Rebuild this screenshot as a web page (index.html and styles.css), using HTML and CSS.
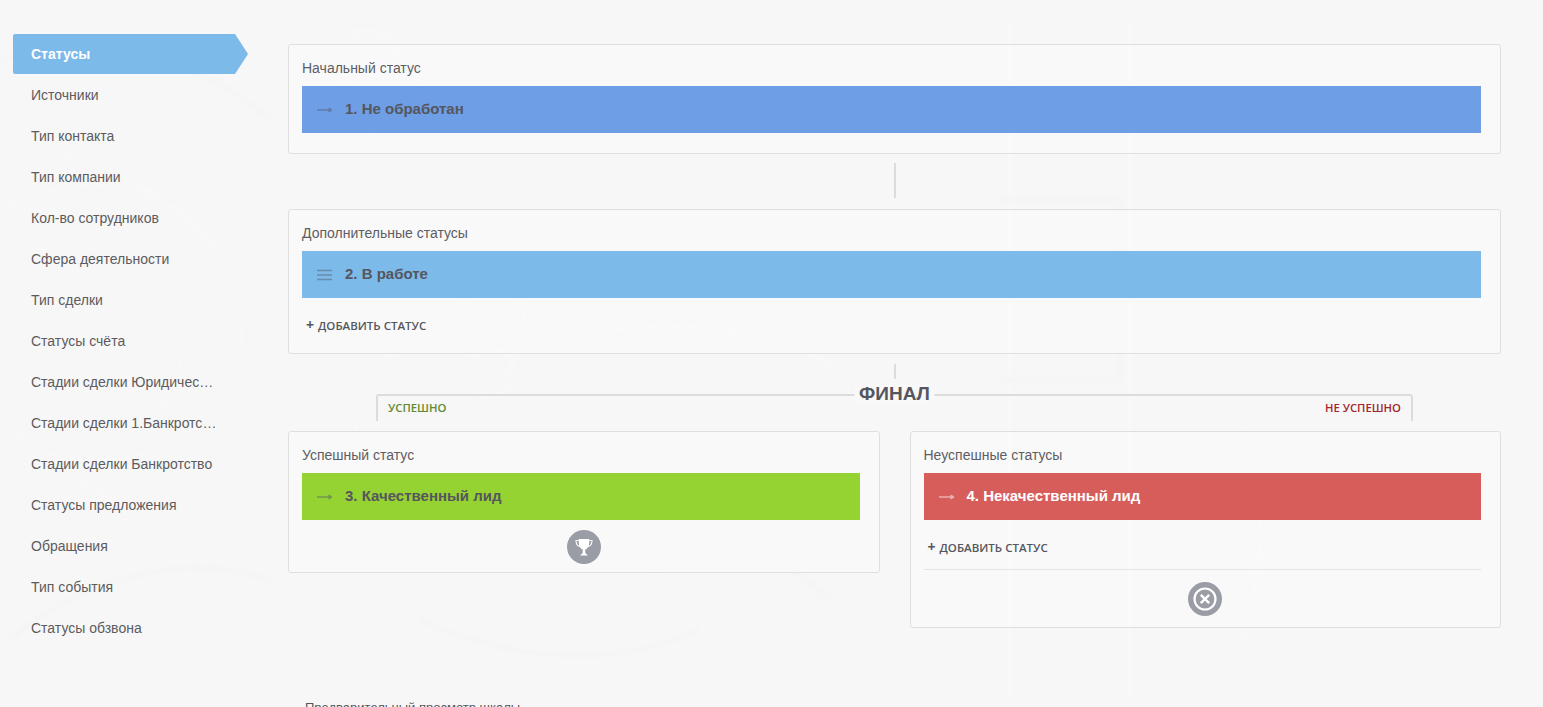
FILE: index.html
```html
<!DOCTYPE html>
<html lang="ru">
<head>
<meta charset="utf-8">
<title>Статусы</title>
<link rel="stylesheet" href="styles.css">
</head>
<body>
<svg class="bg-art" width="1543" height="707" viewBox="0 0 1543 707" aria-hidden="true">
  <g fill="none" stroke="#fbfbfb" stroke-width="2">
    <path d="M0 210c60-30 130-40 190 10s70 130 20 190-130 60-210 30"/>
    <path d="M0 260c50-20 110-20 150 20s40 90 10 130-90 40-160 20"/>
    <path d="M40 150c60 10 130 40 170 100M60 470c50 30 110 60 140 120"/>
    <path d="M470 300c-60 20-110 70-115 130s40 60 120 60"/>
    <circle cx="490" cy="372" r="24"/>
    <path d="M520 300c10 30 0 60-20 80M560 340c120-30 260-10 290 50"/>
    <path d="M350 30c40 0 70 30 70 60s-30 50-60 40-30-50 0-60"/>
    <circle cx="372" cy="52" r="22"/>
    <path d="M1010 20v680M1130 20v680M1240 400c30 60 30 200-20 300"/>
  </g>
  <g fill="none" stroke="#f3f3f3" stroke-width="5">
    <path d="M0 60c90-30 190-10 270 60M10 640c70-60 170-90 260-60"/>
    <path d="M420 620c90 40 190 50 280 10M650 570c70-30 130-20 180 30"/>
    <path d="M1000 200h120v180h-120"/>
  </g>
</svg>
<div class="layout">
  <nav class="sidebar">
    <a class="nav-item active">Статусы</a>
    <a class="nav-item">Источники</a>
    <a class="nav-item">Тип контакта</a>
    <a class="nav-item">Тип компании</a>
    <a class="nav-item">Кол-во сотрудников</a>
    <a class="nav-item">Сфера деятельности</a>
    <a class="nav-item">Тип сделки</a>
    <a class="nav-item">Статусы счёта</a>
    <a class="nav-item">Стадии сделки Юридическое сопровождение</a>
    <a class="nav-item">Стадии сделки 1.Банкротство физлиц</a>
    <a class="nav-item">Стадии сделки Банкротство</a>
    <a class="nav-item">Статусы предложения</a>
    <a class="nav-item">Обращения</a>
    <a class="nav-item">Тип события</a>
    <a class="nav-item">Статусы обзвона</a>
  </nav>
  <main class="content">
    <section class="panel panel-start">
      <h3 class="panel-title">Начальный статус</h3>
      <div class="status status-blue">
        <svg class="status-icon" width="15" height="10" viewBox="0 0 15 10"><path d="M0 5h14M11.500 3.200l3 1.800-3 1.800" fill="none" stroke="currentColor" stroke-width="1.700"/></svg>
        <span>1. Не обработан</span>
      </div>
    </section>
    <div class="connector connector-long"></div>
    <section class="panel panel-extra">
      <h3 class="panel-title">Дополнительные статусы</h3>
      <div class="status status-sky">
        <svg class="status-icon" width="15" height="12" viewBox="0 0 15 12"><path d="M0 1.500h15M0 6h15M0 10.500h15" fill="none" stroke="currentColor" stroke-width="1.700"/></svg>
        <span>2. В работе</span>
      </div>
      <a class="add-status"><b class="plus">+</b> ДОБАВИТЬ СТАТУС</a>
    </section>
    <div class="connector connector-short"></div>
    <div class="final-bracket">
      <span class="final-label">ФИНАЛ</span>
      <span class="outcome outcome-ok">УСПЕШНО</span>
      <span class="outcome outcome-bad">НЕ УСПЕШНО</span>
    </div>
    <div class="final-columns">
      <section class="panel panel-ok">
        <h3 class="panel-title">Успешный статус</h3>
        <div class="status status-green">
          <svg class="status-icon" width="15" height="10" viewBox="0 0 15 10"><path d="M0 5h14M11.500 3.200l3 1.800-3 1.800" fill="none" stroke="currentColor" stroke-width="1.700"/></svg>
          <span>3. Качественный лид</span>
        </div>
        <div class="badge-row badge-row-ok">
          <svg class="badge" width="34" height="34" viewBox="0 0 34 34"><circle cx="17" cy="17" r="17" fill="#9b9da6"/><path d="M11.800 9h10.400v4.500c0 3-2 5.300-3.900 6v3.300c0 .9 2 1.300 2.400 2.700h-7.400c.4-1.400 2.400-1.800 2.400-2.700v-3.300c-1.900-.7-3.900-3-3.900-6z" fill="#fff"/><path d="M11.800 10.500H9c0 3.500 1.500 5.500 4 6.200M22.200 10.500H25c0 3.500-1.500 5.500-4 6.200" fill="none" stroke="#fff" stroke-width="1.100"/></svg>
        </div>
      </section>
      <section class="panel panel-bad">
        <h3 class="panel-title">Неуспешные статусы</h3>
        <div class="status status-red">
          <svg class="status-icon" width="15" height="10" viewBox="0 0 15 10"><path d="M0 5h14M11.500 3.200l3 1.800-3 1.800" fill="none" stroke="currentColor" stroke-width="1.700"/></svg>
          <span>4. Некачественный лид</span>
        </div>
        <a class="add-status add-status-bad"><b class="plus">+</b> ДОБАВИТЬ СТАТУС</a>
        <div class="badge-row badge-row-bad">
          <svg class="badge" width="34" height="34" viewBox="0 0 34 34"><circle cx="17" cy="17" r="17" fill="#9b9da6"/><circle cx="17" cy="17" r="10.500" fill="none" stroke="#fff" stroke-width="2.200"/><path d="M12.800 12.800l8.400 8.400M21.200 12.800l-8.400 8.400" stroke="#fff" stroke-width="2.400"/></svg>
        </div>
      </section>
    </div>
    <p class="preview-title">Предварительный просмотр шкалы</p>
  </main>
</div>
</body>
</html>
```
FILE: styles.css
```css
* { box-sizing: border-box; }
html, body { margin: 0; height: 100%; overflow: hidden; }
body {
  background-color: #f7f7f7;
  font-family: "Liberation Sans", Arial, sans-serif;
  color: #55565e;
}
.bg-art { position: absolute; left: 0; top: 0; opacity: .45; filter: blur(1.5px); }
.layout { position: relative; display: flex; align-items: flex-start; }
.sidebar { width: 248px; flex: none; padding: 34px 0 0 13px; display: flex; flex-direction: column; gap: 1px; }
.nav-item {
  display: block; height: 40px; line-height: 41px; padding: 0 30px 0 18px;
  font-size: 14px; color: #5d5b5e;
  white-space: nowrap; overflow: hidden; text-overflow: ellipsis;
}
.nav-item.active {
  background: #7cbaea; color: #fff; font-weight: 700;
  border-radius: 2px 0 0 2px;
  clip-path: polygon(0 0, 222px 0, 235px 20px, 222px 40px, 0 40px);
}
.content { width: 1213px; margin-left: 40px; padding-top: 44px; flex: none; }
.panel {
  background: rgba(255,255,255,.3);
  border: 1px solid #dfdfdf; border-radius: 3px;
  padding: 13px 19px 0 13px;
}
.panel-start { height: 110px; }
.panel-extra { height: 145px; }
.panel-title { margin: 0 0 8px; font-size: 14px; font-weight: 400; line-height: 20px; color: #5d5d63; }
.status {
  height: 47px; display: flex; align-items: center; padding-left: 15px;
  font-size: 15px; font-weight: 700; color: #55565e; padding-bottom: 3px;
}
.status-icon { color: rgba(85,90,105,.5); margin-right: 13px; margin-top: 3px; flex: none; }
.status-blue { background: #6e9ee5; }
.status-sky { background: #7cbaea; }
.status-green { background: #95d332; }
.status-red { background: #d75d5a; color: #fff; }
.status-red .status-icon { color: rgba(255,255,255,.5); }
.connector { width: 2px; background: #dcdcdc; margin-left: 606px; }
.connector-long { height: 35px; margin-top: 9px; margin-bottom: 11px; }
.connector-short { height: 15px; margin-top: 10px; margin-bottom: 15px; }
.add-status {
  display: block; margin: 19px 0 0 4px; font-family: "Open Sans", sans-serif;
  font-size: 11.500px; font-weight: 600; color: #55565e; line-height: 16px;
}
.plus { font-weight: 700; font-size: 14px; line-height: 16px; margin-right: 1px; }
.final-bracket {
  position: relative; height: 27px; margin: 0 88px;
  border: solid #dcdcdc; border-width: 2px 2px 0; border-radius: 3px 3px 0 0;
  display: flex; justify-content: space-between; align-items: center;
  padding: 0 10px;
}
.final-label {
  position: absolute; left: 50%; top: -13px; transform: translateX(-50%);
  background: #f8f8f8; padding: 0 5px;
  font-size: 19px; font-weight: 700; line-height: 22px; color: #55565e;
}
.outcome { font-size: 11.300px; font-family: "Open Sans", sans-serif; font-weight: 600; line-height: 14px; margin-bottom: 2px; }
.outcome-ok { color: #5f8a30; }
.outcome-bad { color: #a3262e; }
.final-columns { display: flex; align-items: flex-start; gap: 30px; margin-top: 10px; }
.final-columns .panel { flex: 1 1 0; }
.panel-ok { height: 142px; }
.panel-bad { height: 197px; }
.badge-row { display: flex; justify-content: center; padding-left: 6px; }
.badge-row-ok { margin-top: 10px; }
.badge-row-bad { margin-top: 13px; padding-top: 12px; border-top: 1px solid #e4e4e4; }
.badge { display: block; }
.preview-title { margin: 72px 0 0 17px; font-size: 13px; line-height: 16px; color: #55565e; }
```
